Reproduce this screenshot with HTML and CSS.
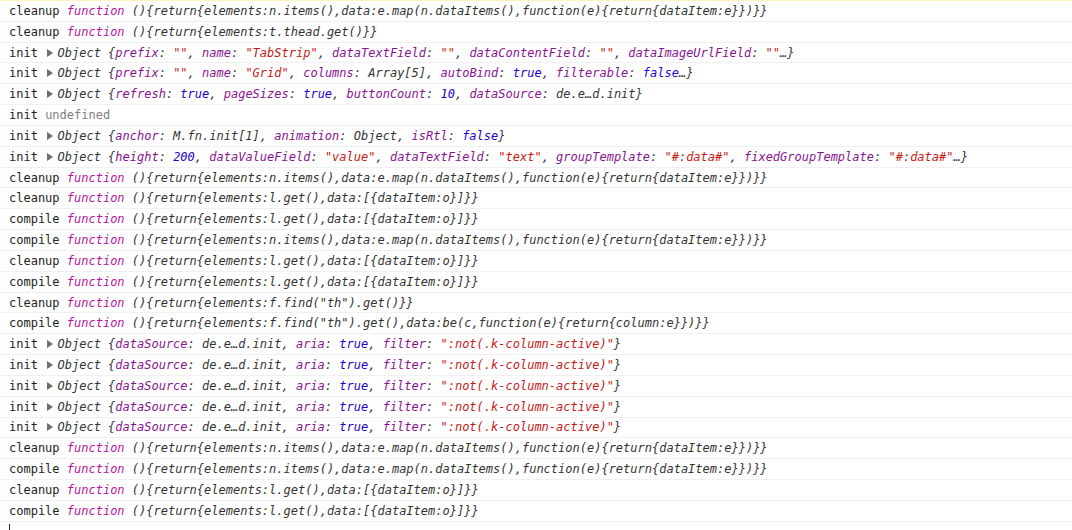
FILE: index.html
```html
<!DOCTYPE html>
<html>
<head>
<meta charset="utf-8">
<link rel="stylesheet" href="styles.css">
</head>
<body>
<div class="console">
  <div class="row"><span class="lbl">cleanup </span><span class="kw">function</span><span class="fb"> (){return{elements:n.items(),data:e.map(n.dataItems(),function(e){return{dataItem:e}})}}</span></div>
  <div class="row"><span class="lbl">cleanup </span><span class="kw">function</span><span class="fb"> (){return{elements:t.thead.get()}}</span></div>
  <div class="row"><span class="lbl">init </span><span class="tri"></span><span class="obj">Object {<span class="k">prefix</span>: <span class="s">""</span>, <span class="k">name</span>: <span class="s">"TabStrip"</span>, <span class="k">dataTextField</span>: <span class="s">""</span>, <span class="k">dataContentField</span>: <span class="s">""</span>, <span class="k">dataImageUrlField</span>: <span class="s">""</span>…}</span></div>
  <div class="row"><span class="lbl">init </span><span class="tri"></span><span class="obj">Object {<span class="k">prefix</span>: <span class="s">""</span>, <span class="k">name</span>: <span class="s">"Grid"</span>, <span class="k">columns</span>: Array[5], <span class="k">autoBind</span>: <span class="b">true</span>, <span class="k">filterable</span>: <span class="b">false</span>…}</span></div>
  <div class="row"><span class="lbl">init </span><span class="tri"></span><span class="obj">Object {<span class="k">refresh</span>: <span class="b">true</span>, <span class="k">pageSizes</span>: <span class="b">true</span>, <span class="k">buttonCount</span>: <span class="b">10</span>, <span class="k">dataSource</span>: de.e…d.init}</span></div>
  <div class="row"><span class="lbl">init </span><span class="undef">undefined</span></div>
  <div class="row"><span class="lbl">init </span><span class="tri"></span><span class="obj">Object {<span class="k">anchor</span>: M.fn.init[1], <span class="k">animation</span>: Object, <span class="k">isRtl</span>: <span class="b">false</span>}</span></div>
  <div class="row"><span class="lbl">init </span><span class="tri"></span><span class="obj">Object {<span class="k">height</span>: <span class="b">200</span>, <span class="k">dataValueField</span>: <span class="s">"value"</span>, <span class="k">dataTextField</span>: <span class="s">"text"</span>, <span class="k">groupTemplate</span>: <span class="s">"#:data#"</span>, <span class="k">fixedGroupTemplate</span>: <span class="s">"#:data#"</span>…}</span></div>
  <div class="row"><span class="lbl">cleanup </span><span class="kw">function</span><span class="fb"> (){return{elements:n.items(),data:e.map(n.dataItems(),function(e){return{dataItem:e}})}}</span></div>
  <div class="row"><span class="lbl">cleanup </span><span class="kw">function</span><span class="fb"> (){return{elements:l.get(),data:[{dataItem:o}]}}</span></div>
  <div class="row"><span class="lbl">compile </span><span class="kw">function</span><span class="fb"> (){return{elements:l.get(),data:[{dataItem:o}]}}</span></div>
  <div class="row"><span class="lbl">compile </span><span class="kw">function</span><span class="fb"> (){return{elements:n.items(),data:e.map(n.dataItems(),function(e){return{dataItem:e}})}}</span></div>
  <div class="row"><span class="lbl">cleanup </span><span class="kw">function</span><span class="fb"> (){return{elements:l.get(),data:[{dataItem:o}]}}</span></div>
  <div class="row"><span class="lbl">compile </span><span class="kw">function</span><span class="fb"> (){return{elements:l.get(),data:[{dataItem:o}]}}</span></div>
  <div class="row"><span class="lbl">cleanup </span><span class="kw">function</span><span class="fb"> (){return{elements:f.find("th").get()}}</span></div>
  <div class="row"><span class="lbl">compile </span><span class="kw">function</span><span class="fb"> (){return{elements:f.find("th").get(),data:be(c,function(e){return{column:e}})}}</span></div>
  <div class="row"><span class="lbl">init </span><span class="tri"></span><span class="obj">Object {<span class="k">dataSource</span>: de.e…d.init, <span class="k">aria</span>: <span class="b">true</span>, <span class="k">filter</span>: <span class="s">":not(.k-column-active)"</span>}</span></div>
  <div class="row"><span class="lbl">init </span><span class="tri"></span><span class="obj">Object {<span class="k">dataSource</span>: de.e…d.init, <span class="k">aria</span>: <span class="b">true</span>, <span class="k">filter</span>: <span class="s">":not(.k-column-active)"</span>}</span></div>
  <div class="row"><span class="lbl">init </span><span class="tri"></span><span class="obj">Object {<span class="k">dataSource</span>: de.e…d.init, <span class="k">aria</span>: <span class="b">true</span>, <span class="k">filter</span>: <span class="s">":not(.k-column-active)"</span>}</span></div>
  <div class="row"><span class="lbl">init </span><span class="tri"></span><span class="obj">Object {<span class="k">dataSource</span>: de.e…d.init, <span class="k">aria</span>: <span class="b">true</span>, <span class="k">filter</span>: <span class="s">":not(.k-column-active)"</span>}</span></div>
  <div class="row"><span class="lbl">init </span><span class="tri"></span><span class="obj">Object {<span class="k">dataSource</span>: de.e…d.init, <span class="k">aria</span>: <span class="b">true</span>, <span class="k">filter</span>: <span class="s">":not(.k-column-active)"</span>}</span></div>
  <div class="row"><span class="lbl">cleanup </span><span class="kw">function</span><span class="fb"> (){return{elements:n.items(),data:e.map(n.dataItems(),function(e){return{dataItem:e}})}}</span></div>
  <div class="row"><span class="lbl">compile </span><span class="kw">function</span><span class="fb"> (){return{elements:n.items(),data:e.map(n.dataItems(),function(e){return{dataItem:e}})}}</span></div>
  <div class="row"><span class="lbl">cleanup </span><span class="kw">function</span><span class="fb"> (){return{elements:l.get(),data:[{dataItem:o}]}}</span></div>
  <div class="row"><span class="lbl">compile </span><span class="kw">function</span><span class="fb"> (){return{elements:l.get(),data:[{dataItem:o}]}}</span></div>
  <div class="prompt"><span class="caret"></span></div>
</div>
</body>
</html>
```

FILE: styles.css
```css
html, body {
  margin: 0;
  padding: 0;
  background: #ffffff;
}
.console {
  border-top: 1px solid #fff3c4;
  font-family: "DejaVu Sans Mono", "Liberation Mono", monospace;
  font-size: 12px;
  color: #222222;
}
.row {
  box-sizing: border-box;
  height: 20.83px;
  border-bottom: 1px solid #f0f0f0;
  padding-left: 9px;
  display: flex;
  align-items: center;
  white-space: pre;
}
.lbl { color: #222222; }
.kw { color: #b5169c; font-style: italic; }
.fb { color: #333333; font-style: italic; }
.obj { color: #333333; font-style: italic; }
.k { color: #881391; }
.s { color: #c41a16; }
.b { color: #1c00cf; }
.undef { color: #808080; }
.tri {
  display: inline-block;
  width: 12.4px;
  height: 12px;
  position: relative;
}
.tri::before {
  content: "";
  position: absolute;
  left: 1.5px;
  top: 2px;
  border-left: 6.5px solid #6e6e6e;
  border-top: 4px solid transparent;
  border-bottom: 4px solid transparent;
}
.prompt {
  height: 8px;
  padding-left: 9px;
  padding-top: 2px;
}
.caret {
  display: block;
  width: 1px;
  height: 8px;
  background: #222222;
}
```
